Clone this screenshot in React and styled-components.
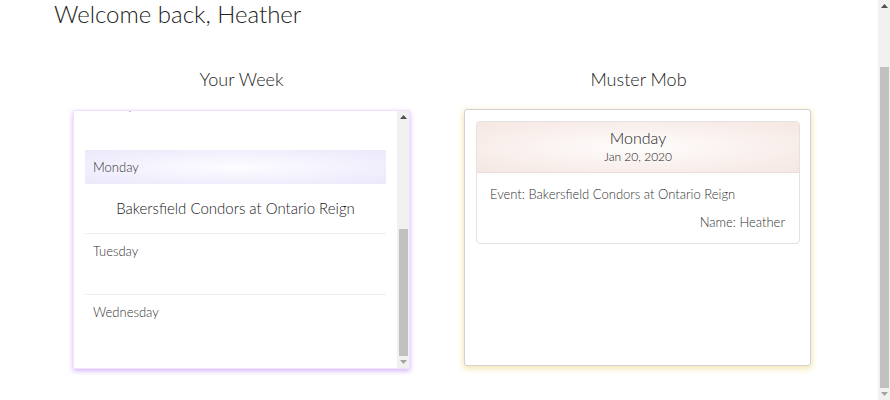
import React, { useLayoutEffect, useRef } from "react";
import styled, { createGlobalStyle } from "styled-components";

const GlobalStyle = createGlobalStyle`
  body {
    margin: 0;
    font-family: Lato, "Open Sans", sans-serif;
    color: #333;
    background: #fff;
  }
`;

const Root = styled.div`
  display: flex;
  height: 100vh;
`;

const Viewport = styled.div`
  flex: 1;
  overflow: hidden;
`;

/* fake classic scrollbar */
const Bar = styled.div`
  width: ${(p) => p.size}px;
  flex-shrink: 0;
  display: flex;
  flex-direction: column;
  background: #f1f1f1;
`;

const BarButton = styled.div`
  height: ${(p) => p.size}px;
  flex-shrink: 0;
  display: flex;
  align-items: center;
  justify-content: center;
`;

const Track = styled.div`
  flex: 1;
  display: flex;
  flex-direction: column;
`;

const Thumb = styled.div`
  margin: 0 1px 0 2px;
  background: #c1c1c1;
`;

function ScrollBar({ size, thumbTop, thumbHeight }) {
  return (
    <Bar size={size}>
      <BarButton size={size}>
        <svg width="7" height="4" viewBox="0 0 7 4">
          <path d="M0 4h7L3.5 0z" fill="#505050" />
        </svg>
      </BarButton>
      <Track>
        <div style={{ height: thumbTop }} />
        <Thumb style={{ height: thumbHeight }} />
      </Track>
      <BarButton size={size}>
        <svg width="7" height="4" viewBox="0 0 7 4">
          <path d="M0 0h7L3.5 4z" fill="#a3a3a3" />
        </svg>
      </BarButton>
    </Bar>
  );
}

const Page = styled.div`
  padding: 62px 0 32px 43px;
`;

const Welcome = styled.h1`
  margin: 0 0 0 11px;
  font-size: 24px;
  font-weight: 300;
  line-height: 30px;
  color: #222;
`;

const Columns = styled.div`
  display: grid;
  grid-template-columns: 397px 397px;
  margin-top: 38px;
`;

const Column = styled.div`
  display: flex;
  flex-direction: column;
`;

const ColumnTitle = styled.h3`
  margin: 0;
  font-size: 18px;
  font-weight: 300;
  line-height: 24px;
  text-align: center;
  color: #222;
`;

const WeekCard = styled.div`
  margin: 20px 31px 0 31px;
  height: 257px;
  background: #fff;
  box-shadow: 0 0 0 1px #efe3fe, 0 2px 5px 1px #d4b2fb;
  display: flex;
`;

const ScrollArea = styled.div`
  flex: 1;
  overflow: hidden;
  padding: 0 11px 0 11px;
`;

const ScrollInner = styled.div`
  padding-bottom: 13px;
`;

const WeekHeader = styled.div`
  height: 179px;
  padding-top: 20px;
  box-sizing: border-box;
  text-align: center;
  font-size: 14px;
`;

const DaySection = styled.div`
  border-top: ${(p) => (p.first ? "none" : "1px solid #eee")};
  min-height: ${(p) => (p.tall ? "63px" : "61px")};
  box-sizing: border-box;
`;

const DayLabel = styled.div`
  padding: 8px;
  font-size: 13px;
  font-weight: 300;
  line-height: 18px;
  color: #333;
  background: ${(p) =>
    p.active
      ? "radial-gradient(ellipse at center, #fdfcff 0%, #f3f1fd 55%, #ebe8fb 100%)"
      : "transparent"};
`;

const DayEvent = styled.div`
  padding: 12px 8px 13px;
  font-size: 15px;
  font-weight: 300;
  line-height: 24px;
  text-align: center;
  color: #222;
`;

const MobCard = styled.div`
  margin: 18px 26px 0 24px;
  height: 257px;
  box-sizing: border-box;
  background: #fff;
  border: 1px solid #d2d2d2;
  border-radius: 3px;
  box-shadow: 0 2px 6px 1px #f4e6b4;
  padding: 11px 10px 0 11px;
`;

const EventCard = styled.div`
  border: 1px solid #e2e2e2;
  border-radius: 4px;
  overflow: hidden;
`;

const EventHeader = styled.div`
  padding: 6px 0;
  text-align: center;
  border-bottom: 1px solid #eadfdb;
  background: radial-gradient(ellipse at center, #fefdfc 0%, #f9efec 60%, #f6e7e2 100%);
`;

const EventDay = styled.div`
  font-size: 16px;
  font-weight: 300;
  line-height: 20px;
  color: #222;
`;

const EventDate = styled.div`
  font-size: 12px;
  font-weight: 300;
  line-height: 18px;
  color: #222;
`;

const EventBody = styled.div`
  padding: 12px 14px 12px 13px;
  font-size: 13px;
  font-weight: 300;
  line-height: 18px;
  color: #333;
`;

const EventLine = styled.div`
  text-align: ${(p) => (p.right ? "right" : "left")};
  margin-top: ${(p) => (p.right ? "10px" : "0")};
`;

const days = [
  { name: "Sunday", tall: 1 },
  { name: "Monday", event: "Bakersfield Condors at Ontario Reign" },
  { name: "Tuesday" },
  { name: "Wednesday" },
];

export default function App() {
  const pageRef = useRef(null);
  const listRef = useRef(null);

  useLayoutEffect(() => {
    if (listRef.current) listRef.current.scrollTop = listRef.current.scrollHeight;
    if (pageRef.current) pageRef.current.scrollTop = 65;
  }, []);

  return (
    <>
      <GlobalStyle />
      <Root>
        <Viewport ref={pageRef}>
          <Page>
            <Welcome>Welcome back, Heather</Welcome>
            <Columns>
              <Column>
                <ColumnTitle>Your Week</ColumnTitle>
                <WeekCard>
                  <ScrollArea ref={listRef}>
                    <ScrollInner>
                      <WeekHeader>Jan 19 – Jan 25, 2020</WeekHeader>
                      {days.map((d) => (
                        <DaySection key={d.name} first={d.event ? 1 : 0} tall={d.tall}>
                          <DayLabel active={d.event ? 1 : 0}>{d.name}</DayLabel>
                          {d.event && <DayEvent>{d.event}</DayEvent>}
                        </DaySection>
                      ))}
                    </ScrollInner>
                  </ScrollArea>
                  <ScrollBar size={12} thumbTop={106} thumbHeight={127} />
                </WeekCard>
              </Column>
              <Column>
                <ColumnTitle>Muster Mob</ColumnTitle>
                <MobCard>
                  <EventCard>
                    <EventHeader>
                      <EventDay>Monday</EventDay>
                      <EventDate>Jan 20, 2020</EventDate>
                    </EventHeader>
                    <EventBody>
                      <EventLine>Event: Bakersfield Condors at Ontario Reign</EventLine>
                      <EventLine right>Name: Heather</EventLine>
                    </EventBody>
                  </EventCard>
                </MobCard>
              </Column>
            </Columns>
          </Page>
        </Viewport>
        <ScrollBar size={12} thumbTop={55} thumbHeight={321} />
      </Root>
    </>
  );
}
